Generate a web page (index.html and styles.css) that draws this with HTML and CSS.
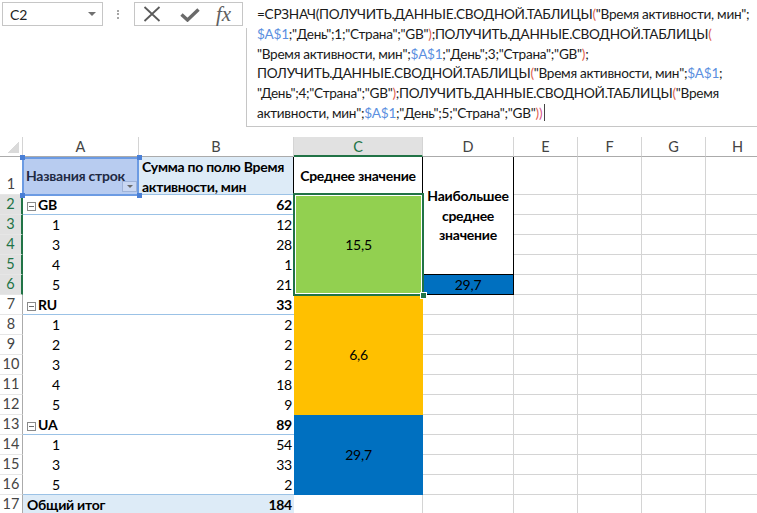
FILE: index.html
```html
<!DOCTYPE html>
<html lang="ru">
<head>
<meta charset="utf-8">
<title>Excel</title>
<link rel="stylesheet" href="styles.css">
</head>
<body>
<div class="fbar">
  <div class="namebox"><span>C2</span><span class="caret"></span></div>
  <div class="dots"></div>
  <div class="btns">
    <svg class="ico-x" width="18" height="16" viewBox="0 0 18 16"><path d="M1.5 1 L16.5 15 M16.5 1 L1.5 15" stroke="#5a5a5a" stroke-width="1.8" fill="none"/></svg>
    <svg class="ico-ok" width="20" height="14" viewBox="0 0 20 14"><path d="M1.5 6.5 L7.5 12 L18.5 1.5" stroke="#6a6a6a" stroke-width="3.4" fill="none"/></svg>
    <span class="fx">fx</span>
  </div>
  <div class="formula">
    <div class="ln">=СРЗНАЧ(ПОЛУЧИТЬ.ДАННЫЕ.СВОДНОЙ.ТАБЛИЦЫ<span class="pr">(</span>"Время активности, мин";</div>
    <div class="ln"><span class="rf">$A$1</span>;"День";1;"Страна";"GB"<span class="pr">)</span>;ПОЛУЧИТЬ.ДАННЫЕ.СВОДНОЙ.ТАБЛИЦЫ<span class="pr">(</span></div>
    <div class="ln">"Время активности, мин";<span class="rf">$A$1</span>;"День";3;"Страна";"GB"<span class="pr">)</span>;</div>
    <div class="ln">ПОЛУЧИТЬ.ДАННЫЕ.СВОДНОЙ.ТАБЛИЦЫ<span class="pr">(</span>"Время активности, мин";<span class="rf">$A$1</span>;</div>
    <div class="ln">"День";4;"Страна";"GB"<span class="pr">)</span>;ПОЛУЧИТЬ.ДАННЫЕ.СВОДНОЙ.ТАБЛИЦЫ<span class="pr">(</span>"Время</div>
    <div class="ln">активности, мин";<span class="rf">$A$1</span>;"День";5;"Страна";"GB"<span class="pr">)</span><span class="pr2">)</span><span class="cur"></span></div>
  </div>
</div>

<div class="sheet">
  <!-- column headers -->
  <div class="corner"></div>
  <div class="ch">A</div><div class="ch">B</div><div class="ch sel">C</div><div class="ch">D</div>
  <div class="ch">E</div><div class="ch">F</div><div class="ch">G</div><div class="ch">H</div>

  <!-- row 1 -->
  <div class="rh">1</div>
  <div class="a1">Названия строк<span class="fb"></span><span class="hd tl"></span><span class="hd tr"></span><span class="hd bl"></span><span class="hd br"></span></div>
  <div class="b1">Сумма по полю Время<br>активности, мин</div>
  <div class="c1">Среднее значение</div>
  <div class="d1">Наибольшее<br>среднее<br>значение</div>
  <div class="c"></div><div class="c"></div><div class="c"></div><div class="c"></div>

  <!-- row 2 -->
  <div class="rh sel">2</div>
  <div class="p grp"><span class="mb"></span>GB</div><div class="p grp n">62</div>
  <div class="c2">15,5</div>
  <div class="c"></div><div class="c"></div><div class="c"></div><div class="c"></div>

  <!-- row 3 -->
  <div class="rh sel">3</div>
  <div class="p k">1</div><div class="p n">12</div>
  <div class="c"></div><div class="c"></div><div class="c"></div><div class="c"></div>

  <!-- row 4 -->
  <div class="rh sel">4</div>
  <div class="p k">3</div><div class="p n">28</div>
  <div class="c"></div><div class="c"></div><div class="c"></div><div class="c"></div>

  <!-- row 5 -->
  <div class="rh sel">5</div>
  <div class="p k">4</div><div class="p n">1</div>
  <div class="c"></div><div class="c"></div><div class="c"></div><div class="c"></div>

  <!-- row 6 -->
  <div class="rh sel">6</div>
  <div class="p k">5</div><div class="p n">21</div>
  <div class="d6">29,7</div>
  <div class="c"></div><div class="c"></div><div class="c"></div><div class="c"></div>

  <!-- row 7 -->
  <div class="rh">7</div>
  <div class="p grp"><span class="mb"></span>RU</div><div class="p grp n">33</div>
  <div class="c7">6,6</div>
  <div class="c"></div><div class="c"></div><div class="c"></div><div class="c"></div><div class="c"></div>

  <!-- rows 8-12 -->
  <div class="rh">8</div>
  <div class="p k">1</div><div class="p n">2</div>
  <div class="c"></div><div class="c"></div><div class="c"></div><div class="c"></div><div class="c"></div>

  <div class="rh">9</div>
  <div class="p k">2</div><div class="p n">2</div>
  <div class="c"></div><div class="c"></div><div class="c"></div><div class="c"></div><div class="c"></div>

  <div class="rh">10</div>
  <div class="p k">3</div><div class="p n">2</div>
  <div class="c"></div><div class="c"></div><div class="c"></div><div class="c"></div><div class="c"></div>

  <div class="rh">11</div>
  <div class="p k">4</div><div class="p n">18</div>
  <div class="c"></div><div class="c"></div><div class="c"></div><div class="c"></div><div class="c"></div>

  <div class="rh">12</div>
  <div class="p k">5</div><div class="p n">9</div>
  <div class="c"></div><div class="c"></div><div class="c"></div><div class="c"></div><div class="c"></div>

  <!-- row 13 -->
  <div class="rh">13</div>
  <div class="p grp"><span class="mb"></span>UA</div><div class="p grp n">89</div>
  <div class="c13">29,7</div>
  <div class="c"></div><div class="c"></div><div class="c"></div><div class="c"></div><div class="c"></div>

  <!-- rows 14-16 -->
  <div class="rh">14</div>
  <div class="p k">1</div><div class="p n">54</div>
  <div class="c"></div><div class="c"></div><div class="c"></div><div class="c"></div><div class="c"></div>

  <div class="rh">15</div>
  <div class="p k">3</div><div class="p n">33</div>
  <div class="c"></div><div class="c"></div><div class="c"></div><div class="c"></div><div class="c"></div>

  <div class="rh">16</div>
  <div class="p k pre">5</div><div class="p n pre">2</div>
  <div class="c"></div><div class="c"></div><div class="c"></div><div class="c"></div><div class="c"></div>

  <!-- row 17 -->
  <div class="rh">17</div>
  <div class="p tot">Общий итог</div><div class="p tot n">184</div>
  <div class="c"></div><div class="c"></div><div class="c"></div><div class="c"></div><div class="c"></div><div class="c"></div>
</div>
</body>
</html>
```

FILE: styles.css
```css
html, body {
  margin: 0;
  padding: 0;
  background: #ffffff;
}
body {
  width: 757px;
  height: 513px;
  overflow: hidden;
  font-family: Lato, "Liberation Sans", sans-serif;
  color: #000;
}

/* ---------- formula bar ---------- */
.fbar {
  height: 137px;
  display: flex;
  align-items: flex-start;
}
.namebox {
  flex: none;
  margin: 2px 0 0 2px;
  width: 101px;
  height: 24px;
  box-sizing: border-box;
  border: 1px solid #c6c6c6;
  display: flex;
  align-items: center;
  justify-content: space-between;
  padding: 0 6px 0 7px;
  font-size: 14px;
  color: #222;
}
.caret {
  width: 0;
  height: 0;
  border-left: 4px solid transparent;
  border-right: 4px solid transparent;
  border-top: 4px solid #707070;
}
.dots {
  flex: none;
  margin: 10px 0 0 14px;
  width: 2px;
  height: 9px;
  background: repeating-linear-gradient(to bottom, #a6a6a6 0 2px, transparent 2px 3.5px);
}
.btns {
  flex: none;
  margin: 2px 0 0 15px;
  width: 109px;
  height: 24px;
  box-sizing: border-box;
  border: 1px solid #c6c6c6;
  display: flex;
  align-items: center;
  padding-left: 8px;
}
.ico-x { flex: none; margin-right: 19px; }
.ico-ok { flex: none; margin-right: 16px; margin-top: 2px; }
.fx {
  font-family: "Liberation Serif", serif;
  font-style: italic;
  font-size: 21px;
  color: #606060;
  line-height: 20px;
}
.formula {
  position: relative;
  margin-left: 3px;
  flex: 1;
  min-width: 0;
  height: 127px;
  box-sizing: border-box;
  border-bottom: 1px solid #c6c6c6;
  padding: 5px 0 0 11px;
  font-size: 13.6px;
  letter-spacing: -0.28px;
  line-height: 19.8px;
  color: #1a1a1a;
}
.formula::before {
  content: "";
  position: absolute;
  left: 0;
  top: 28px;
  bottom: -1px;
  border-left: 1px solid #c6c6c6;
}
.ln { white-space: nowrap; }
.pr { color: #e0604f; }
.pr2 { color: #d9588a; }
.rf { color: #5b8fe0; }
.cur {
  display: inline-block;
  width: 1px;
  height: 17px;
  background: #444;
  vertical-align: -3px;
  margin-left: 2px;
}

/* ---------- sheet grid ---------- */
.sheet {
  display: grid;
  grid-template-columns: 23px 116px 155px 129px 91px 64px 64px 64px 64px;
  grid-template-rows: 20px 38px repeat(16, 20px);
  width: 770px;
  font-size: 14px;
  letter-spacing: -0.25px;
}
.sheet > div {
  box-sizing: border-box;
  position: relative;
  white-space: nowrap;
  line-height: 20px;
}

.corner {
  border-right: 1px solid #d4d4d4;
  border-bottom: 1px solid #ababab;
  background: linear-gradient(135deg, transparent 50%, #dadada 50%) no-repeat;
  background-size: 11px 11px;
  background-position: right 3px bottom 3px;
}
.ch {
  text-align: center;
  color: #444;
  letter-spacing: 0;
  font-size: 14.5px;
  border-right: 1px solid #d4d4d4;
  border-bottom: 1px solid #ababab;
  line-height: 19px !important;
}
.ch.sel {
  background: #e1e1e1;
  color: #217346;
  border-bottom: 2px solid #217346;
}
.rh {
  display: flex;
  align-items: flex-end;
  justify-content: center;
  color: #444;
  letter-spacing: 0;
  font-size: 14.5px;
  border-right: 1px solid #ababab;
  border-bottom: 1px solid #e6e6e6;
}
.rh.sel {
  background: #e1e1e1;
  color: #217346;
  border-right: 2px solid #217346;
}
.c {
  border-right: 1px solid #d4d4d4;
  border-bottom: 1px solid #d4d4d4;
}

/* pivot cells */
.p { padding: 0 2px 0 4px; }
.p.k { padding-left: 29px; }
.p.n { text-align: right; padding-right: 2px; }
.grp {
  font-weight: bold;
  border-bottom: 1px solid #9bc2e6;
}
.pre { border-bottom: 1px solid #9bc2e6; }
.tot {
  font-weight: bold;
  background: #ddebf7;
}
.mb {
  display: inline-block;
  width: 9px;
  height: 9px;
  box-sizing: border-box;
  border: 1px solid #8a8a8a;
  margin-right: 2px;
  vertical-align: -1px;
  background: linear-gradient(#6a6a6a, #6a6a6a) no-repeat center / 5px 1px;
}

.a1 {
  background: #b8ccf0;
  color: #1f2a44;
  font-weight: bold;
  display: flex;
  align-items: center;
  padding-left: 3px;
}
.a1::after {
  content: "";
  position: absolute;
  left: -1px;
  top: 0;
  right: 0;
  bottom: -1px;
  border: 2px solid #6c9be3;
  z-index: 2;
}
.fb {
  position: absolute;
  right: 2px;
  bottom: 3px;
  width: 15px;
  height: 11px;
  box-sizing: border-box;
  border: 1px solid #9fb3d8;
  background: #c9d7f2;
  z-index: 3;
}
.fb::after {
  content: "";
  position: absolute;
  left: 4px;
  top: 3px;
  border-left: 3px solid transparent;
  border-right: 3px solid transparent;
  border-top: 3px solid #6a6a6a;
}
.hd {
  position: absolute;
  width: 5px;
  height: 5px;
  background: #4a7fd6;
  z-index: 4;
}
.hd.tl { left: -3px; top: -2px; }
.hd.tr { right: -3px; top: -2px; }
.hd.bl { left: -3px; bottom: -3px; }
.hd.br { right: -3px; bottom: -3px; }

.b1 {
  background: #ddebf7;
  font-weight: bold;
  padding-left: 3px;
  border-right: 1px solid #000;
  border-bottom: 1px solid #9bc2e6;
  overflow: hidden;
}
.c1 {
  font-weight: bold;
  display: flex;
  align-items: center;
  justify-content: center;
  border-right: 1px solid #000;
}
.d1 {
  grid-row: span 5;
  font-weight: bold;
  display: flex;
  align-items: center;
  justify-content: center;
  text-align: center;
  line-height: 19.5px !important;
  border-right: 1px solid #000;
  border-bottom: 1px solid #000;
}
.d6 {
  background: #0070c0;
  text-align: center;
  border-right: 1px solid #000;
  border-bottom: 1px solid #000;
}
.c2, .c7, .c13 {
  display: flex;
  align-items: center;
  justify-content: center;
}
.c2 {
  grid-row: span 5;
  background: #92d050;
  z-index: 2;
}
.c2::after {
  content: "";
  position: absolute;
  left: -1px;
  top: -2px;
  right: -1px;
  bottom: -1px;
  border: 2px solid #217346;
  box-shadow: inset 0 0 0 1px #ffffff;
}
.c2::before {
  content: "";
  position: absolute;
  right: -4px;
  bottom: -4px;
  width: 5px;
  height: 5px;
  background: #217346;
  border: 1px solid #ffffff;
  z-index: 3;
}
.c7 {
  grid-row: span 6;
  background: #ffc000;
}
.c13 {
  grid-row: span 4;
  background: #0070c0;
}
```
